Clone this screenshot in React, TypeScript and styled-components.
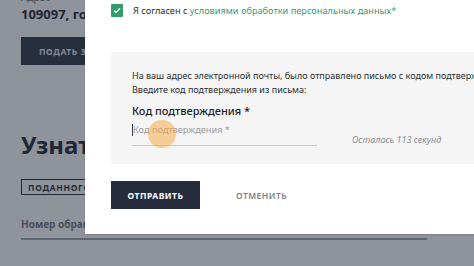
import * as React from 'react';
import styled, { createGlobalStyle } from 'styled-components';

const Color = {
  navy: '#262c3c',
  green: '#2f9c6c',
  link: '#3b9a78',
  text: '#2b2e33',
  muted: '#8a8d92',
  panel: '#f5f5f5',
};

const GlobalStyle = createGlobalStyle`
  html, body {
    margin: 0;
    padding: 0;
    width: 474px;
    height: 266px;
    overflow: hidden;
    background: #fff;
    font-family: 'Noto Sans', 'Open Sans', sans-serif;
  }
  * { box-sizing: border-box; }
`;

const S = {
  Screen: styled.div`
    position: relative;
    width: 474px;
    height: 266px;
    overflow: hidden;
  `,

  // underlying page
  Page: styled.div`
    display: flex;
    flex-direction: column;
    padding: 0 47px 0 21px;
    margin-top: -9px;
    white-space: nowrap;
  `,
  FieldLabel: styled.div`
    font-size: 10px;
    line-height: 12px;
    color: #6b6f78;
  `,
  Address: styled.div`
    margin-top: 2px;
    font-size: 13px;
    line-height: 18px;
    font-weight: 700;
    color: #1c212c;
  `,
  PageButton: styled.div`
    margin-top: 14px;
    width: 180px;
    height: 28px;
    background: #2c3448;
    color: #e6e8ee;
    font-size: 8.5px;
    font-weight: 700;
    letter-spacing: 0.6px;
    display: flex;
    align-items: center;
    padding-left: 18px;
  `,
  Heading: styled.h2`
    margin: 65px 0 0;
    font-size: 24px;
    line-height: 30px;
    font-weight: 700;
    color: #202633;
  `,
  Tag: styled.div`
    margin-top: 19px;
    align-self: flex-start;
    height: 16px;
    border: 1.5px solid #1f2430;
    padding: 0 6px;
    font-size: 8.5px;
    font-weight: 700;
    letter-spacing: 0.7px;
    color: #2a303c;
    display: flex;
    align-items: center;
  `,
  RequestLabel: styled.div`
    margin-top: 22px;
    font-size: 10px;
    line-height: 14px;
    font-weight: 700;
    color: #6f747f;
  `,
  RequestLine: styled.div`
    margin-top: 7px;
    height: 1.5px;
    background: #9ea2aa;
  `,

  Backdrop: styled.div`
    position: absolute;
    inset: 0;
    background: rgba(31, 39, 55, 0.5);
  `,

  // modal
  Modal: styled.div`
    position: absolute;
    left: 85px;
    top: 0;
    width: 440px;
    height: 234px;
    background: #fff;
    padding: 4px 26px 0;
    display: flex;
    flex-direction: column;
    box-shadow: 0 1px 2px rgba(0, 0, 0, 0.12);
  `,
  Agree: styled.label`
    display: flex;
    align-items: center;
    gap: 10px;
    font-size: 9.2px;
    line-height: 13px;
    color: ${Color.text};
    white-space: nowrap;
  `,
  Checkbox: styled.span`
    flex: 0 0 12px;
    width: 12px;
    height: 13px;
    border-radius: 1px;
    background: ${Color.green};
    display: flex;
    align-items: center;
    justify-content: center;
  `,
  Link: styled.span`
    color: ${Color.link};
  `,
  Panel: styled.div`
    margin-top: 35px;
    background: ${Color.panel};
    padding: 17px 21px 0;
    height: 112px;
    white-space: nowrap;
  `,
  Info: styled.p`
    margin: 0;
    font-size: 9px;
    line-height: 14px;
    color: ${Color.text};
  `,
  CodeLabel: styled.div`
    margin-top: 6px;
    font-size: 11px;
    line-height: 16px;
    font-weight: 500;
    color: #1f2227;
  `,
  InputRow: styled.div`
    display: flex;
    align-items: flex-end;
    margin-top: 2px;
  `,
  Input: styled.div`
    position: relative;
    width: 185px;
    height: 25px;
    border-bottom: 1px solid #c9c9c9;
    font-size: 9.2px;
    line-height: 14px;
    color: #9d9d9d;
    display: flex;
    align-items: flex-start;
    padding-top: 2px;
  `,
  Caret: styled.span`
    width: 1px;
    height: 12px;
    margin-top: 1px;
    background: #333;
  `,
  Touch: styled.span`
    position: absolute;
    left: 16px;
    top: -1px;
    width: 28px;
    height: 28px;
    border-radius: 50%;
    background: rgba(246, 172, 72, 0.55);
  `,
  Timer: styled.div`
    margin: 0 0 -1px 35px;
    font-size: 9px;
    line-height: 14px;
    font-style: italic;
    color: ${Color.muted};
  `,
  Actions: styled.div`
    margin-top: 17px;
    display: flex;
    align-items: center;
    gap: 36px;
  `,
  Submit: styled.button`
    width: 89px;
    height: 28px;
    border: none;
    background: ${Color.navy};
    color: #fff;
    font-family: inherit;
    font-size: 8.5px;
    font-weight: 700;
    letter-spacing: 0.5px;
    padding: 0;
  `,
  Cancel: styled.button`
    border: none;
    background: none;
    padding: 0;
    font-family: inherit;
    font-size: 8.5px;
    font-weight: 600;
    letter-spacing: 0.5px;
    color: #7d8086;
  `,
};

const App = () => (
  <S.Screen>
    <GlobalStyle />
    <S.Page>
      <S.FieldLabel>Адрес</S.FieldLabel>
      <S.Address>109097, город Москва, ул. Ильинка, д. 9</S.Address>
      <S.PageButton>ПОДАТЬ ЗАЯВЛЕНИЕ</S.PageButton>
      <S.Heading>Узнать статус обращения</S.Heading>
      <S.Tag>ПОДАННОГО ОБРАЩЕНИЯ</S.Tag>
      <S.RequestLabel>Номер обращения</S.RequestLabel>
      <S.RequestLine />
    </S.Page>
    <S.Backdrop />

    <S.Modal>
      <S.Agree>
        <S.Checkbox>
          <svg width="8" height="7" viewBox="0 0 8 7">
            <path d="M1 3.6 L3 5.5 L7 1.2" fill="none" stroke="#fff" strokeWidth="1.3" />
          </svg>
        </S.Checkbox>
        <span>
          Я согласен с <S.Link>условиями обработки персональных данных*</S.Link>
        </span>
      </S.Agree>

      <S.Panel>
        <S.Info>
          На ваш адрес электронной почты, было отправлено письмо с кодом подтверждения.
        </S.Info>
        <S.Info>Введите код подтверждения из письма:</S.Info>
        <S.CodeLabel>Код подтверждения *</S.CodeLabel>
        <S.InputRow>
          <S.Input>
            <S.Caret />
            Код подтверждения *
            <S.Touch />
          </S.Input>
          <S.Timer>Осталось 113 секунд</S.Timer>
        </S.InputRow>
      </S.Panel>

      <S.Actions>
        <S.Submit>ОТПРАВИТЬ</S.Submit>
        <S.Cancel>ОТМЕНИТЬ</S.Cancel>
      </S.Actions>
    </S.Modal>
  </S.Screen>
);

export default App;
